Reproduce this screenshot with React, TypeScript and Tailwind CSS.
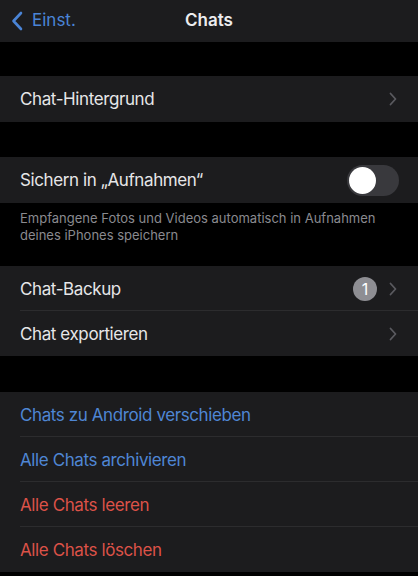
import React from "react";

const Chevron = () => (
  <svg width="8" height="14" viewBox="0 0 8 14" fill="none">
    <path d="M1.5 1.5 L6.5 7 L1.5 12.5" stroke="#5a5a5f" strokeWidth="1.8" strokeLinecap="round" strokeLinejoin="round" />
  </svg>
);

const Row = ({ label, right, sep, h = "h-[45px]", color = "text-[#e6e6e8]" }: { label: string; right?: React.ReactNode; sep?: boolean; h?: string; color?: string }) => (
  <div className={`relative flex ${h} items-center justify-between pl-5 pr-[21px]`}>
    <span className={`pt-[2px] text-[17px] tracking-[-0.4px] ${color}`}>{label}</span>
    {right}
    {sep && <div className="absolute bottom-0 left-5 right-0 h-px bg-[#2c2c2e]" />}
  </div>
);

export default function App() {
  return (
    <div className="h-[576px] w-[418px] overflow-hidden bg-black" style={{ fontFamily: "Inter, 'Liberation Sans', sans-serif" }}>
      <div className="relative flex h-[42px] items-center justify-center bg-[#1c1c1e]">
        <div className="absolute left-[11px] top-0 flex h-full items-center gap-[9px]">
          <svg width="12" height="20" viewBox="0 0 12 20" fill="none">
            <path d="M10 2 L2.5 10 L10 18" stroke="#4a84d6" strokeWidth="2.6" strokeLinecap="round" strokeLinejoin="round" />
          </svg>
          <span className="text-[17px] text-[#4a84d6]">Einst.</span>
        </div>
        <span className="text-[17px] font-semibold text-[#ececee]">Chats</span>
      </div>

      <div className="h-[34px]" />
      <div className="bg-[#1c1c1e]">
        <Row label="Chat-Hintergrund" h="h-[46px]" right={<Chevron />} />
      </div>

      <div className="h-[35px]" />
      <div className="bg-[#1c1c1e]">
        <div className="flex h-[46px] items-center justify-between pl-5 pr-[19px]">
          <span className="pt-[2px] text-[17px] tracking-[-0.4px] text-[#e6e6e8]">Sichern in „Aufnahmen“</span>
          <div className="relative h-[31px] w-[52px] rounded-full bg-[#39393d]">
            <div className="absolute left-[2px] top-[2px] h-[27px] w-[27px] rounded-full bg-white" />
          </div>
        </div>
      </div>
      <div className="h-[63px] px-5 pt-[7px] text-[13px] leading-[17px] text-[#8a8a8f]">
        Empfangene Fotos und Videos automatisch in Aufnahmen deines iPhones speichern
      </div>

      <div className="bg-[#1c1c1e]">
        <Row
          label="Chat-Backup"
          sep
          right={
            <div className="flex items-center gap-[12px]">
              <div className="flex h-[24px] w-[24px] items-center justify-center rounded-full bg-[#8e8e93] text-[16px] text-white">1</div>
              <Chevron />
            </div>
          }
        />
        <Row label="Chat exportieren" right={<Chevron />} />
      </div>

      <div className="h-[36px]" />
      <div className="bg-[#1c1c1e]">
        <Row label="Chats zu Android verschieben" color="text-[#4f86d4]" sep />
        <Row label="Alle Chats archivieren" color="text-[#4f86d4]" sep />
        <Row label="Alle Chats leeren" color="text-[#dc5248]" sep />
        <Row label="Alle Chats löschen" color="text-[#dc5248]" />
      </div>
    </div>
  );
}
